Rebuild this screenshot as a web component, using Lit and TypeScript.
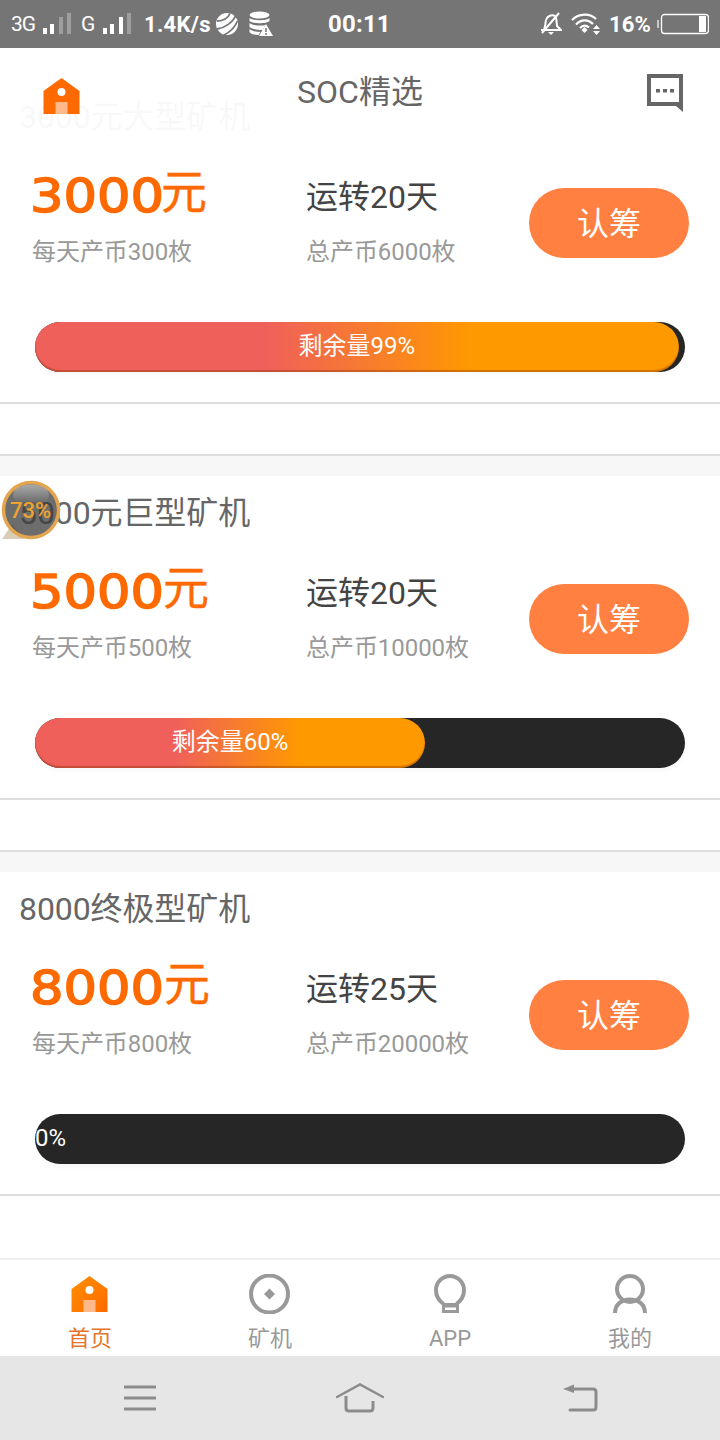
import { LitElement, html, css, svg } from "lit";
import { customElement } from "lit/decorators.js";

const cards = [
  { title: "3000元大型矿机", price: "3000", priceW: 131, days: "运转20天", daily: "每天产币300枚", total: "总产币6000枚", pct: 99, label: "剩余量99%" },
  { title: "5000元巨型矿机", price: "5000", priceW: 133, days: "运转20天", daily: "每天产币500枚", total: "总产币10000枚", pct: 60, label: "剩余量60%" },
  { title: "8000终极型矿机", price: "8000", priceW: 134, days: "运转25天", daily: "每天产币800枚", total: "总产币20000枚", pct: 0, label: "0%" },
];

const house = (fill: string) => html`<svg class="house" width="38" height="38" viewBox="0 0 38 38">
  <defs><linearGradient id="hg" x1="0" y1="0" x2="1" y2="1"><stop offset="0" stop-color="#ff9000"/><stop offset="1" stop-color="#ff6a00"/></linearGradient></defs>
  <path d="M18.500 1 L36.500 14 V37 H.5 V14 Z" fill="${fill}"/>
  <circle cx="18.500" cy="15" r="4" fill="#fff"/>
  <rect x="12.500" y="25" width="12" height="12" fill="#ffb98a"/>
</svg>`;

const signal = (on: number) => svg`<svg width="28" height="22" viewBox="0 0 28 22">
  ${[[0, 15, 6], [7, 11, 10], [16, 4, 17], [24, 0, 21]].map(([x, y, h], i) =>
    svg`<rect x="${x}" y="${y}" width="4" height="${h}" fill="#fff" fill-opacity="${i < on ? 1 : 0.3}"/>`)}
</svg>`;

@customElement("app-root")
export class AppRoot extends LitElement {
  static styles = css`
    :host { display: block; width: 720px; height: 1440px; overflow: hidden; font-family: Roboto, "Noto Sans CJK SC", sans-serif; background: #fff; }
    .app { display: flex; flex-direction: column; height: 1440px; }
    .status { height: 48px; flex: none; background: #757575; color: #fff; position: relative; display: flex; align-items: center; font-size: 22px; padding-left: 11px; box-sizing: border-box; }
    .status > * { flex: none; }
    .net { font-size: 21px; width: 32px; letter-spacing: -1px; }
    .net.g { width: 22px; margin-left: 10px; }
    .speed { font-weight: 700; margin-left: 13px; width: 71px; letter-spacing: 0.3px; }
    .time { font-weight: 700; font-size: 24px; margin-left: 55px; width: 64px; letter-spacing: .2px; }
    .bell { margin-left: 148px; }
    .wifi { margin-left: 9px; }
    .pctb { font-weight: 700; font-size: 22px; margin-left: 8px; width: 48px; letter-spacing: .1px; }
    .ball { margin-right: 10px; }
    .main { flex: 1; position: relative; overflow: hidden; background: #f7f7f7; min-height: 0; }
    .header { position: absolute; left: 0; right: 0; top: 0; height: 86px; background: rgba(255,255,255,.955); display: flex; align-items: center; justify-content: space-between; padding: 0 37px 0 42.500px; box-sizing: border-box; z-index: 2; }
    .header h1 { margin: 0; padding-bottom: 4px; font-weight: 400; font-size: 32px; color: #666; position: absolute; left: 0; right: 0; text-align: center; }
    .header svg { position: relative; }
    .header .house { margin-top: 10px; }
    .header .msg { margin-top: 4px; }
    .list { padding-top: 32px; }
    .card { background: #fff; height: 376px; margin-bottom: 20px; box-sizing: border-box; border-bottom: 2px solid #dedede; }
    .card:last-child { border-bottom: 0; height: 386px; margin-bottom: 0; }
    .title { font-size: 32px; line-height: 74px; height: 74px; margin-bottom: 13px; padding-left: 19px; color: #666; letter-spacing: -.1px; }
    .row { display: grid; grid-template-columns: 274px 223px 160px; padding-left: 32px; height: 112px; align-items: center; }
    .price { height: 56px; display: flex; align-items: center; color: #ff6a00; white-space: nowrap; }
    .price b { display: block; flex: none; font-family: "DejaVu Sans", sans-serif; font-weight: 400; font-size: 47px; line-height: 56px; -webkit-text-stroke: 1.5px #ff6a00; transform: scaleX(1.12); transform-origin: 0 50%; margin: 2px 0 0 -2px; }
    .price span { font-size: 46px; line-height: 56px; margin-top: -6px; -webkit-text-stroke: .4px #ff6a00; }
    .days { height: 56px; line-height: 60px; font-size: 32px; color: #444; white-space: nowrap; }
    .sub { height: 56px; line-height: 58px; font-size: 24px; color: #999; white-space: nowrap; letter-spacing: -.05px; }
    .buy { width: 160px; height: 70px; border-radius: 35px; background: #ff8040; color: #fff; font-size: 32px; display: flex; align-items: center; justify-content: center; padding-bottom: 4px; box-sizing: border-box; }
    .bar { margin: 43px 35px 0; height: 50px; border-radius: 25px; background: #262626; box-shadow: 0 2px 6px rgba(0,0,0,.04); }
    .fill { height: 50px; border-radius: 25px; box-sizing: border-box; background: linear-gradient(90deg, #f0605a 36%, #ff9900 68%); box-shadow: inset 0 -2px 1px rgba(120,40,0,.35); color: #fff; font-size: 24px; line-height: 48px; text-align: center; white-space: nowrap; }
    .fill.empty { background: none; box-shadow: none; }
    .rule { height: 2px; background: #dedede; margin-top: 30px; }
    .tabs { height: 98px; flex: none; box-sizing: border-box; border-top: 2px solid #eee; background: #fff; display: grid; grid-template-columns: repeat(4, 180px); }
    .tab { display: flex; flex-direction: column; align-items: center; padding-top: 14px; font-size: 22px; color: #999; line-height: 30px; }
    .tab.on { color: #e4762c; }
    .tab svg { display: block; height: 40px; margin-bottom: 10px; }
    .sys { height: 84px; flex: none; background: #e6e6e6; display: grid; grid-template-columns: repeat(3, 220px); justify-content: center; align-items: center; }
    .sys svg { justify-self: center; }
    .bubble { position: absolute; left: 0; top: 432px; width: 62px; height: 62px; z-index: 3; }
    .bubble svg { position: absolute; left: 0; top: 0; }
    .bubble span { position: absolute; left: 0; right: 0; top: 18px; line-height: 26px; text-align: center; font-size: 22px; font-weight: 500; color: #eda32e; padding-right: 1px; }
  `;

  render() {
    return html`<div class="app">
      <div class="status">
        <span class="net">3G</span>${signal(2)}
        <span class="net g">G</span>${signal(3)}
        <span class="speed">1.4K/s</span>
        <svg class="ball" width="24" height="24" viewBox="0 0 24 24" fill="none"><circle cx="12" cy="12" r="11" fill="#fff"/><path d="M2 9 C8 9 13 6 15 1.500 M2 17 C10 16 18 10 20.500 4 M9 23 C15 20 20 15 22.500 9" stroke="#757575" stroke-width="1.800"/></svg>
        <svg width="24" height="26" viewBox="0 0 24 26"><ellipse cx="10.500" cy="4" rx="10" ry="3.500" fill="#fff"/><path d="M.5 7 c3 3 17 3 20 0 v3 c-3 3 -17 3 -20 0z M.5 12 c3 3 13 3 16 2 l-3 5 c-5 0 -11 -1 -13 -3z M.5 18 c2 2 7 3 11 3 l-2 3 c-4 0 -8 -1 -9 -3z" fill="#fff"/><path d="M17 13 L24 25 H10 Z" fill="#fff"/><path d="M17 17 V21 M17 22 V24" stroke="#757575" stroke-width="1.500"/></svg>
        <span class="time">00:11</span>
        <svg class="bell" width="22" height="24" viewBox="0 0 22 24" fill="none"><path d="M4 17 C6 14 5 11 6 8 C7 4 12 2 15 4 C17 6 16.500 11 17 14 L21 18 H1" stroke="#fff" stroke-width="2"/><path d="M8 20 H14 L11 23 Z" fill="#fff"/><path d="M19 1 L2 21" stroke="#fff" stroke-width="2"/></svg>
        <svg class="wifi" width="30" height="24" viewBox="0 0 30 24" fill="none"><path d="M1 8 C8 1 19 1 25 7 M5 12.500 C10 7 17 7 22 12 M9 16 C12 13 15 13 18 15.500" stroke="#fff" stroke-width="2.200"/><path d="M10.500 18 L13.500 15 L16.500 18 L13.500 21Z" fill="#fff"/><path d="M25.500 13 L29 17 H22 Z M25.500 23 L29 19 H22 Z" fill="#fff"/></svg>
        <span class="pctb">16%</span>
        <svg width="52" height="22" viewBox="0 0 52 22" fill="none"><path d="M1 7 V15" stroke="#fff" stroke-opacity=".8" stroke-width="1.500"/><rect x="4.500" y="1.500" width="47" height="19" rx="3" stroke="#fff" stroke-width="1.300"/><rect x="42" y="3" width="7" height="16" fill="#fff"/></svg>
      </div>

      <div class="main">
        <div class="header">
          ${house("#ff6a00")}
          <h1>SOC精选</h1>
          <svg class="msg" width="36" height="38" viewBox="0 0 36 38"><path d="M0 0 H36 V38 L29 32 H0 Z M4 4 V28 H32 V4 Z" fill="#666" fill-rule="evenodd"/><rect x="9" y="15" width="4" height="3.500" fill="#666"/><rect x="16" y="15" width="4" height="3.500" fill="#666"/><rect x="23" y="15" width="4" height="3.500" fill="#666"/></svg>
        </div>
        <div class="list">
          ${cards.map((c) => html`<section class="card">
            <div class="title">${c.title}</div>
            <div class="row">
              <div>
                <div class="price"><b style="width:${c.priceW}px">${c.price}</b><span>元</span></div>
                <div class="sub">${c.daily}</div>
              </div>
              <div>
                <div class="days">${c.days}</div>
                <div class="sub">${c.total}</div>
              </div>
              <div class="buy">认筹</div>
            </div>
            <div class="bar"><div class="fill ${c.pct === 0 ? "empty" : ""}" style="width:${c.pct}%">${c.label}</div></div>
            <div class="rule"></div>
          </section>`)}
        </div>
        <div class="bubble">
          <svg width="62" height="62" viewBox="0 0 62 62">
            <defs>
              <linearGradient id="gl" x1="0" y1="0" x2="0" y2="1"><stop offset="0" stop-color="#c4c4c4"/><stop offset="1" stop-color="#5c5c5c"/></linearGradient>
            </defs>
            <path d="M12 44 L2 59 H24 Z" fill="#d9cdb8"/>
            <circle cx="31" cy="30" r="27.500" fill="#3c3c3c" fill-opacity=".75" stroke="#e3a550" stroke-width="3.500"/>
            <ellipse cx="31" cy="15" rx="18" ry="10.500" fill="url(#gl)" fill-opacity=".7"/>
          </svg>
          <span>73%</span>
        </div>
      </div>

      <nav class="tabs">
        <div class="tab on">${house("url(#hg)")}首页</div>
        <div class="tab"><svg width="42" height="40" viewBox="0 0 42 40" fill="none"><circle cx="20.500" cy="20" r="18.500" stroke="#999" stroke-width="4"/><path d="M20.500 14.500 L26 20 L20.500 25.500 L15 20 Z" fill="#999"/></svg>矿机</div>
        <div class="tab"><svg width="36" height="40" viewBox="0 0 36 40" fill="none"><path d="M11.500 30 C6 26 4 21 4 16 A14 14 0 1 1 32 16 C32 21 30 26 24.500 30" stroke="#999" stroke-width="4"/><path d="M10 29 H27 V39 H10 Z M13 33.500 V36 H24 V33.500 Z" fill="#999" fill-rule="evenodd"/></svg>APP</div>
        <div class="tab"><svg width="36" height="40" viewBox="0 0 36 40" fill="none"><circle cx="18" cy="15" r="13" stroke="#999" stroke-width="4"/><path d="M3 39 C3 30 10 25.500 18 25.500 C26 25.500 33 30 33 39" stroke="#999" stroke-width="4"/></svg>我的</div>
      </nav>

      <div class="sys">
        <svg width="34" height="26" viewBox="0 0 34 26" fill="none"><path d="M1 2 H33 M1 13 H33 M1 24 H33" stroke="#8c8c8c" stroke-width="3"/></svg>
        <svg width="48" height="30" viewBox="0 0 48 30" fill="none"><path d="M1 14 L24 1.500 L47 14" stroke="#8c8c8c" stroke-width="2.500" stroke-linecap="round"/><path d="M10 13 V25 Q10 28 13 28 H34 Q37 28 37 25 V18" stroke="#8c8c8c" stroke-width="3"/></svg>
        <svg width="36" height="30" viewBox="0 0 36 30" fill="none"><path d="M1 6 L12 1.500 V10 Z" fill="#8c8c8c"/><path d="M8 6 H31 Q34 6 34 9 V24 Q34 27 31 27 H8" stroke="#8c8c8c" stroke-width="3" stroke-linecap="round"/></svg>
      </div>
    </div>`;
  }
}
